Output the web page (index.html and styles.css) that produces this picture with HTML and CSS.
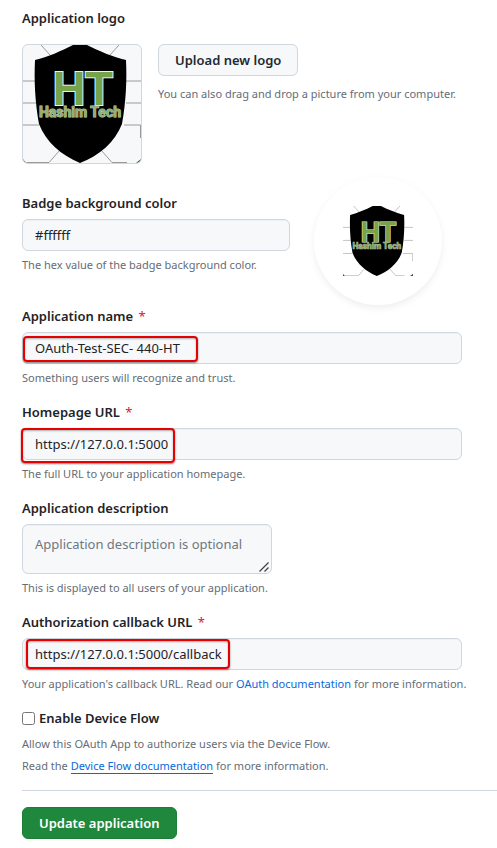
FILE: index.html
```html
<!DOCTYPE html>
<html lang="en">
<head>
<meta charset="utf-8">
<meta name="viewport" content="width=device-width, initial-scale=1">
<title>OAuth application settings</title>
<link rel="stylesheet" href="styles.css">
</head>
<body>
<svg class="sprite" aria-hidden="true">
  <symbol id="shield-logo" viewBox="0 0 118 118">
    <g fill="none" stroke="#9a9a9a" stroke-width="1">
      <path d="M18 0L27 10M96 0L87 10M0 36H13M103 36H118M0 58H13M103 58H118M0 80H16M101 80H117.500V93M0 116.500L3 117.500H26L37 105M78 105L89 117.500H104"/>
    </g>
    <path d="M0 114L3 118H0ZM113 118L118 114V118Z" fill="#41583a"/>
    <path d="M50 0H64C76 6 90 12 103 15C104 35 103 57 99 79C92 97 76 111 57 118C38 110 23 97 16 79C12 57 11 35 12 15C25 12 38 6 50 0Z" fill="#000"/>
    <g font-family="Roboto, Arial, sans-serif" font-weight="700" text-anchor="middle" fill="#76a34b" stroke="#eef2e9" paint-order="stroke">
      <text x="60" y="60" font-size="46" stroke-width="2">HT</text>
      <text x="57" y="72" font-size="14" fill="#8fb072" stroke="#c3cfba" stroke-width="1">Hashim Tech</text>
    </g>
  </symbol>
</svg>
<form class="settings">
  <section>
    <h2 class="label">Application logo</h2>
    <div class="logo-row">
      <div class="logo-box"><svg class="logo" role="img" aria-label="Hashim Tech"><use href="#shield-logo"/></svg></div>
      <div>
        <button class="btn" type="button">Upload new logo</button>
        <p class="hint hint-upload">You can also drag and drop a picture from your computer.</p>
      </div>
    </div>
  </section>

  <section class="badge-row">
    <div class="badge-field">
      <label class="label" for="color">Badge background color</label>
      <input class="control" id="color" type="text" value="#ffffff">
      <p class="hint">The hex value of the badge background color.</p>
    </div>
    <div class="badge"><svg class="badge-logo" role="img" aria-label="Hashim Tech badge"><use href="#shield-logo"/></svg></div>
  </section>

  <div class="field">
    <label class="label" for="name">Application name <span class="required">*</span></label>
    <div class="control-wrap">
      <input class="control" id="name" type="text" value="OAuth-Test-SEC- 440-HT">
      <span class="mark mark-name"></span>
    </div>
    <p class="hint">Something users will recognize and trust.</p>
  </div>

  <div class="field">
    <label class="label" for="home">Homepage URL <span class="required">*</span></label>
    <div class="control-wrap">
      <input class="control" id="home" type="text" value="https://127.0.0.1:5000">
      <span class="mark mark-home"></span>
    </div>
    <p class="hint">The full URL to your application homepage.</p>
  </div>

  <div class="field">
    <label class="label" for="description">Application description</label>
    <div class="textarea-wrap">
      <textarea class="control textarea" id="description" placeholder="Application description is optional"></textarea>
      <svg class="grip" viewBox="0 0 10 10" aria-hidden="true"><path d="M0.500 9.500L9.500 0.500M5.500 9.500L9.500 5.500" fill="none" stroke="#444" stroke-width="1.300"/></svg>
    </div>
    <p class="hint">This is displayed to all users of your application.</p>
  </div>

  <div class="field">
    <label class="label" for="callback">Authorization callback URL <span class="required">*</span></label>
    <div class="control-wrap">
      <input class="control" id="callback" type="text" value="https://127.0.0.1:5000/callback">
      <span class="mark mark-callback"></span>
    </div>
    <p class="hint">Your application's callback URL. Read our <a class="link" href="#oauth">OAuth documentation</a> for more information.</p>
  </div>

  <div class="field">
    <div class="check-row">
      <input class="checkbox" id="device" type="checkbox">
      <label class="check-label" for="device">Enable Device Flow</label>
    </div>
    <p class="hint hint-device">Allow this OAuth App to authorize users via the Device Flow.<br>Read the <a class="link link-underlined" href="#device-flow">Device Flow documentation</a> for more information.</p>
  </div>

  <div class="actions">
    <button class="btn btn-primary" type="submit">Update application</button>
  </div>
</form>
</body>
</html>
```

FILE: styles.css
```css
* { box-sizing: border-box; }

body {
  margin: 0;
  background: #fff;
  color: #1f2328;
  font: 13px/20px "Noto Sans", "Open Sans", sans-serif;
}

.sprite { position: absolute; width: 0; height: 0; }

.settings { padding: 8px 0 8px 22px; }

.label {
  display: block;
  margin: 0 0 6px;
  font-size: 13px;
  line-height: 20px;
  font-weight: 600;
}

.required { color: #cf222e; font-weight: 400; margin-left: 2px; }

.hint {
  margin: 4px 0 0;
  color: #656d76;
  font-size: 11px;
  line-height: 20px;
}

.logo-row { display: flex; gap: 16px; margin-top: 16px; }

.logo-box {
  flex: none;
  width: 120px;
  height: 120px;
  border: 1px solid #d0d7de;
  border-radius: 6px;
  background: #f6f8fa;
  overflow: hidden;
}

.logo { display: block; width: 100%; height: 100%; }

.btn {
  height: 32px;
  padding: 0 16px;
  border: 1px solid #d0d7de;
  border-radius: 6px;
  background: #f6f8fa;
  color: #24292f;
  font: inherit;
  font-weight: 600;
}

.hint-upload { margin-top: 8px; }

.badge-row { display: flex; gap: 24px; margin-top: 13px; }

.badge-field { width: 268px; padding-top: 16px; }

.badge {
  display: flex;
  flex: none;
  align-items: center;
  justify-content: center;
  width: 128px;
  height: 128px;
  border-radius: 50%;
  background: #fff;
  box-shadow: 0 3px 6px rgba(140, 149, 159, 0.15);
}

.badge-logo { width: 70px; height: 70px; }

.control {
  display: block;
  width: 100%;
  height: 32px;
  padding: 0 12px;
  border: 1px solid #d0d7de;
  border-radius: 6px;
  background: #f6f8fa;
  box-shadow: inset 0 1px 0 rgba(208, 215, 222, 0.2);
  color: #1f2328;
  font: inherit;
}

.field { margin-top: 14px; }
.badge-row + .field { margin-top: 1px; }

.control-wrap { position: relative; max-width: 440px; }

.mark {
  position: absolute;
  border: 2px solid #e60000;
  border-radius: 4px;
  box-shadow: 0 1px 2px rgba(0, 0, 0, 0.5), inset 0 1px 2px rgba(0, 0, 0, 0.3);
  pointer-events: none;
}

.mark-name { left: 1px; top: 4px; width: 175px; height: 26px; }
.mark-home { left: -1px; top: 0; width: 154px; height: 35px; }
.mark-callback { left: 4px; top: 1px; width: 204px; height: 30px; }

.textarea-wrap { position: relative; width: 250px; }

.textarea { height: 50px; padding: 9px 12px; resize: none; overflow: hidden; }
.textarea::placeholder { color: #6e7781; }

.grip { position: absolute; right: 3px; bottom: 2px; width: 10px; height: 10px; }

.link { color: #0969da; text-decoration: none; }
.link-underlined { border-bottom: 1px solid #0969da; }

.check-row { display: flex; align-items: center; gap: 4px; }
.checkbox { width: 13px; height: 13px; margin: 0; }
.check-label { font-weight: 600; }

.hint-device { margin-top: 5px; line-height: 22px; }

.actions { margin-top: 13px; padding-top: 16px; border-top: 1px solid #d0d7de; }

.btn-primary { border-color: #1d7d37; background: #1f883d; color: #fff; }
```
